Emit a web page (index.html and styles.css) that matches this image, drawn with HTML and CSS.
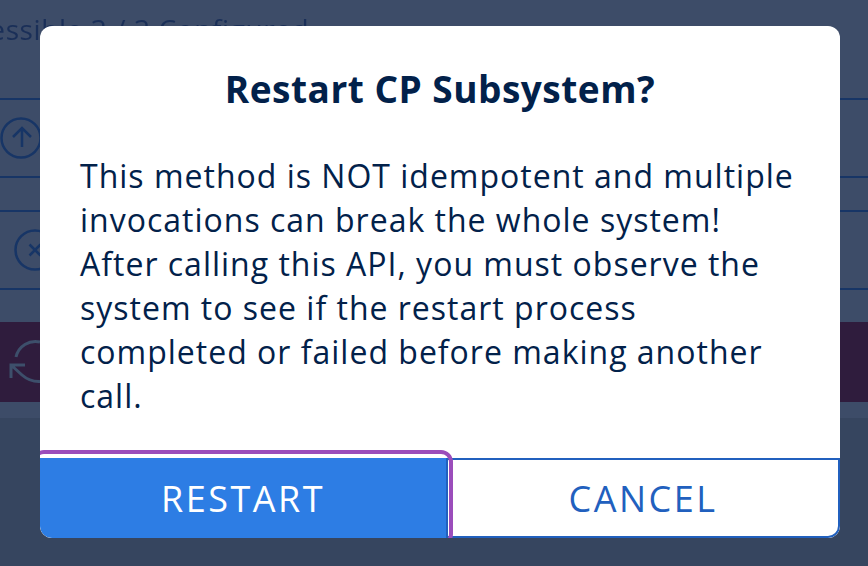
FILE: index.html
```html
<!DOCTYPE html>
<html lang="en">
<head>
<meta charset="utf-8">
<title>Restart CP Subsystem?</title>
<link rel="stylesheet" href="styles.css">
</head>
<body>
<div class="page">
  <p class="status">Accessible 3 / 3 Configured</p>
  <div class="row">
    <svg class="row-icon" width="42" height="44" viewBox="0 0 42 44"><circle cx="21" cy="22" r="19.5"/><path d="M22 31V12M13 21l9-9 9 9"/></svg>
  </div>
  <div class="row row-second">
    <svg class="row-icon row-icon-shift" width="42" height="44" viewBox="0 0 42 44"><circle cx="21" cy="22" r="19.5"/><path d="M15.5 16.5l11 11M26.5 16.5l-11 11"/></svg>
  </div>
  <div class="restart-strip">
    <svg class="strip-icon" width="40" height="50" viewBox="0 0 40 50"><path d="M8 20A20 20 0 0 1 32 5M3 41V28H17M3 28L14 38Q22 45 32 44.5"/></svg>
  </div>
  <div class="strip-gap"></div>
  <div class="page-foot"></div>
</div>
<div class="overlay">
  <div class="modal">
    <h1 class="modal-title">Restart CP Subsystem?</h1>
    <p class="modal-body">This method is NOT idempotent and multiple invocations can break the whole system! After calling this API, you must observe the system to see if the restart process completed or failed before making another call.</p>
    <div class="modal-actions">
      <button class="btn btn-primary" type="button">RESTART</button>
      <button class="btn btn-secondary" type="button">CANCEL</button>
    </div>
  </div>
</div>
</body>
</html>
```
FILE: styles.css
```css
* { box-sizing: border-box; }
html, body { margin: 0; height: 100%; }
body {
  width: 868px;
  height: 566px;
  overflow: hidden;
  background: #3d4c68;
  font-family: "Open Sans", sans-serif;
  position: relative;
}
.page {
  height: 566px;
  display: flex;
  flex-direction: column;
  filter: blur(0.7px);
  overflow: hidden;
}
.status {
  margin: 0 0 0 -57px;
  height: 98px;
  flex: none;
  padding-top: 10px;
  font-size: 28px;
  line-height: 38px;
  letter-spacing: 0.6px;
  color: #1a2f58;
  white-space: nowrap;
}
.row {
  height: 80px;
  flex: none;
  border-top: 2px solid #173566;
  border-bottom: 2px solid #173566;
  display: flex;
  align-items: center;
}
.row-second { margin-top: 32px; }
.row-icon { fill: none; stroke: #173566; stroke-width: 2.5; flex: none; }
.row-icon-shift { margin-left: 14px; }
.restart-strip {
  margin-top: 32px;
  height: 80px;
  flex: none;
  background: #2f1c3d;
  display: flex;
  align-items: center;
  padding-left: 8px;
}
.strip-icon { fill: none; stroke: #3d4f6b; stroke-width: 3; flex: none; }
.strip-gap { height: 16px; flex: none; background: #3d4c68; }
.page-foot { flex: 1; background: #36455f; }
.overlay {
  position: absolute;
  inset: 0;
  display: flex;
  padding: 26px 0 0 40px;
}
.modal {
  width: 800px;
  height: 512px;
  background: #fff;
  border-radius: 12px;
  overflow: hidden;
  display: flex;
  flex-direction: column;
  color: #02214a;
}
.modal-title {
  margin: 0;
  padding-top: 39px;
  height: 116px;
  text-align: center;
  font-size: 37px;
  line-height: 48px;
  font-weight: 700;
  letter-spacing: 0.5px;
}
.modal-body {
  margin: 0;
  padding: 12px 40px 0;
  flex: 1;
  font-size: 32px;
  line-height: 44px;
  letter-spacing: 1px;
}
.modal-actions {
  display: grid;
  grid-template-columns: 406px 394px;
  height: 80px;
}
.btn {
  font-family: "Open Sans", sans-serif;
  font-size: 36px;
  letter-spacing: 2.5px;
  margin: 0;
  padding: 0;
  border-radius: 0;
  position: relative;
}
.btn-primary {
  background: #2d7de4;
  color: #fff;
  border: 0;
  border-bottom-left-radius: 12px;
}
.btn-primary::after {
  content: "";
  position: absolute;
  top: -8px;
  left: -8px;
  right: -7px;
  bottom: -8px;
  border: 4px solid #9b4dbb;
  border-radius: 12px;
  z-index: 2;
}
.btn-secondary {
  background: #fff;
  color: #2160be;
  border: 2px solid #2160be;
  border-bottom-right-radius: 12px;
}
```
